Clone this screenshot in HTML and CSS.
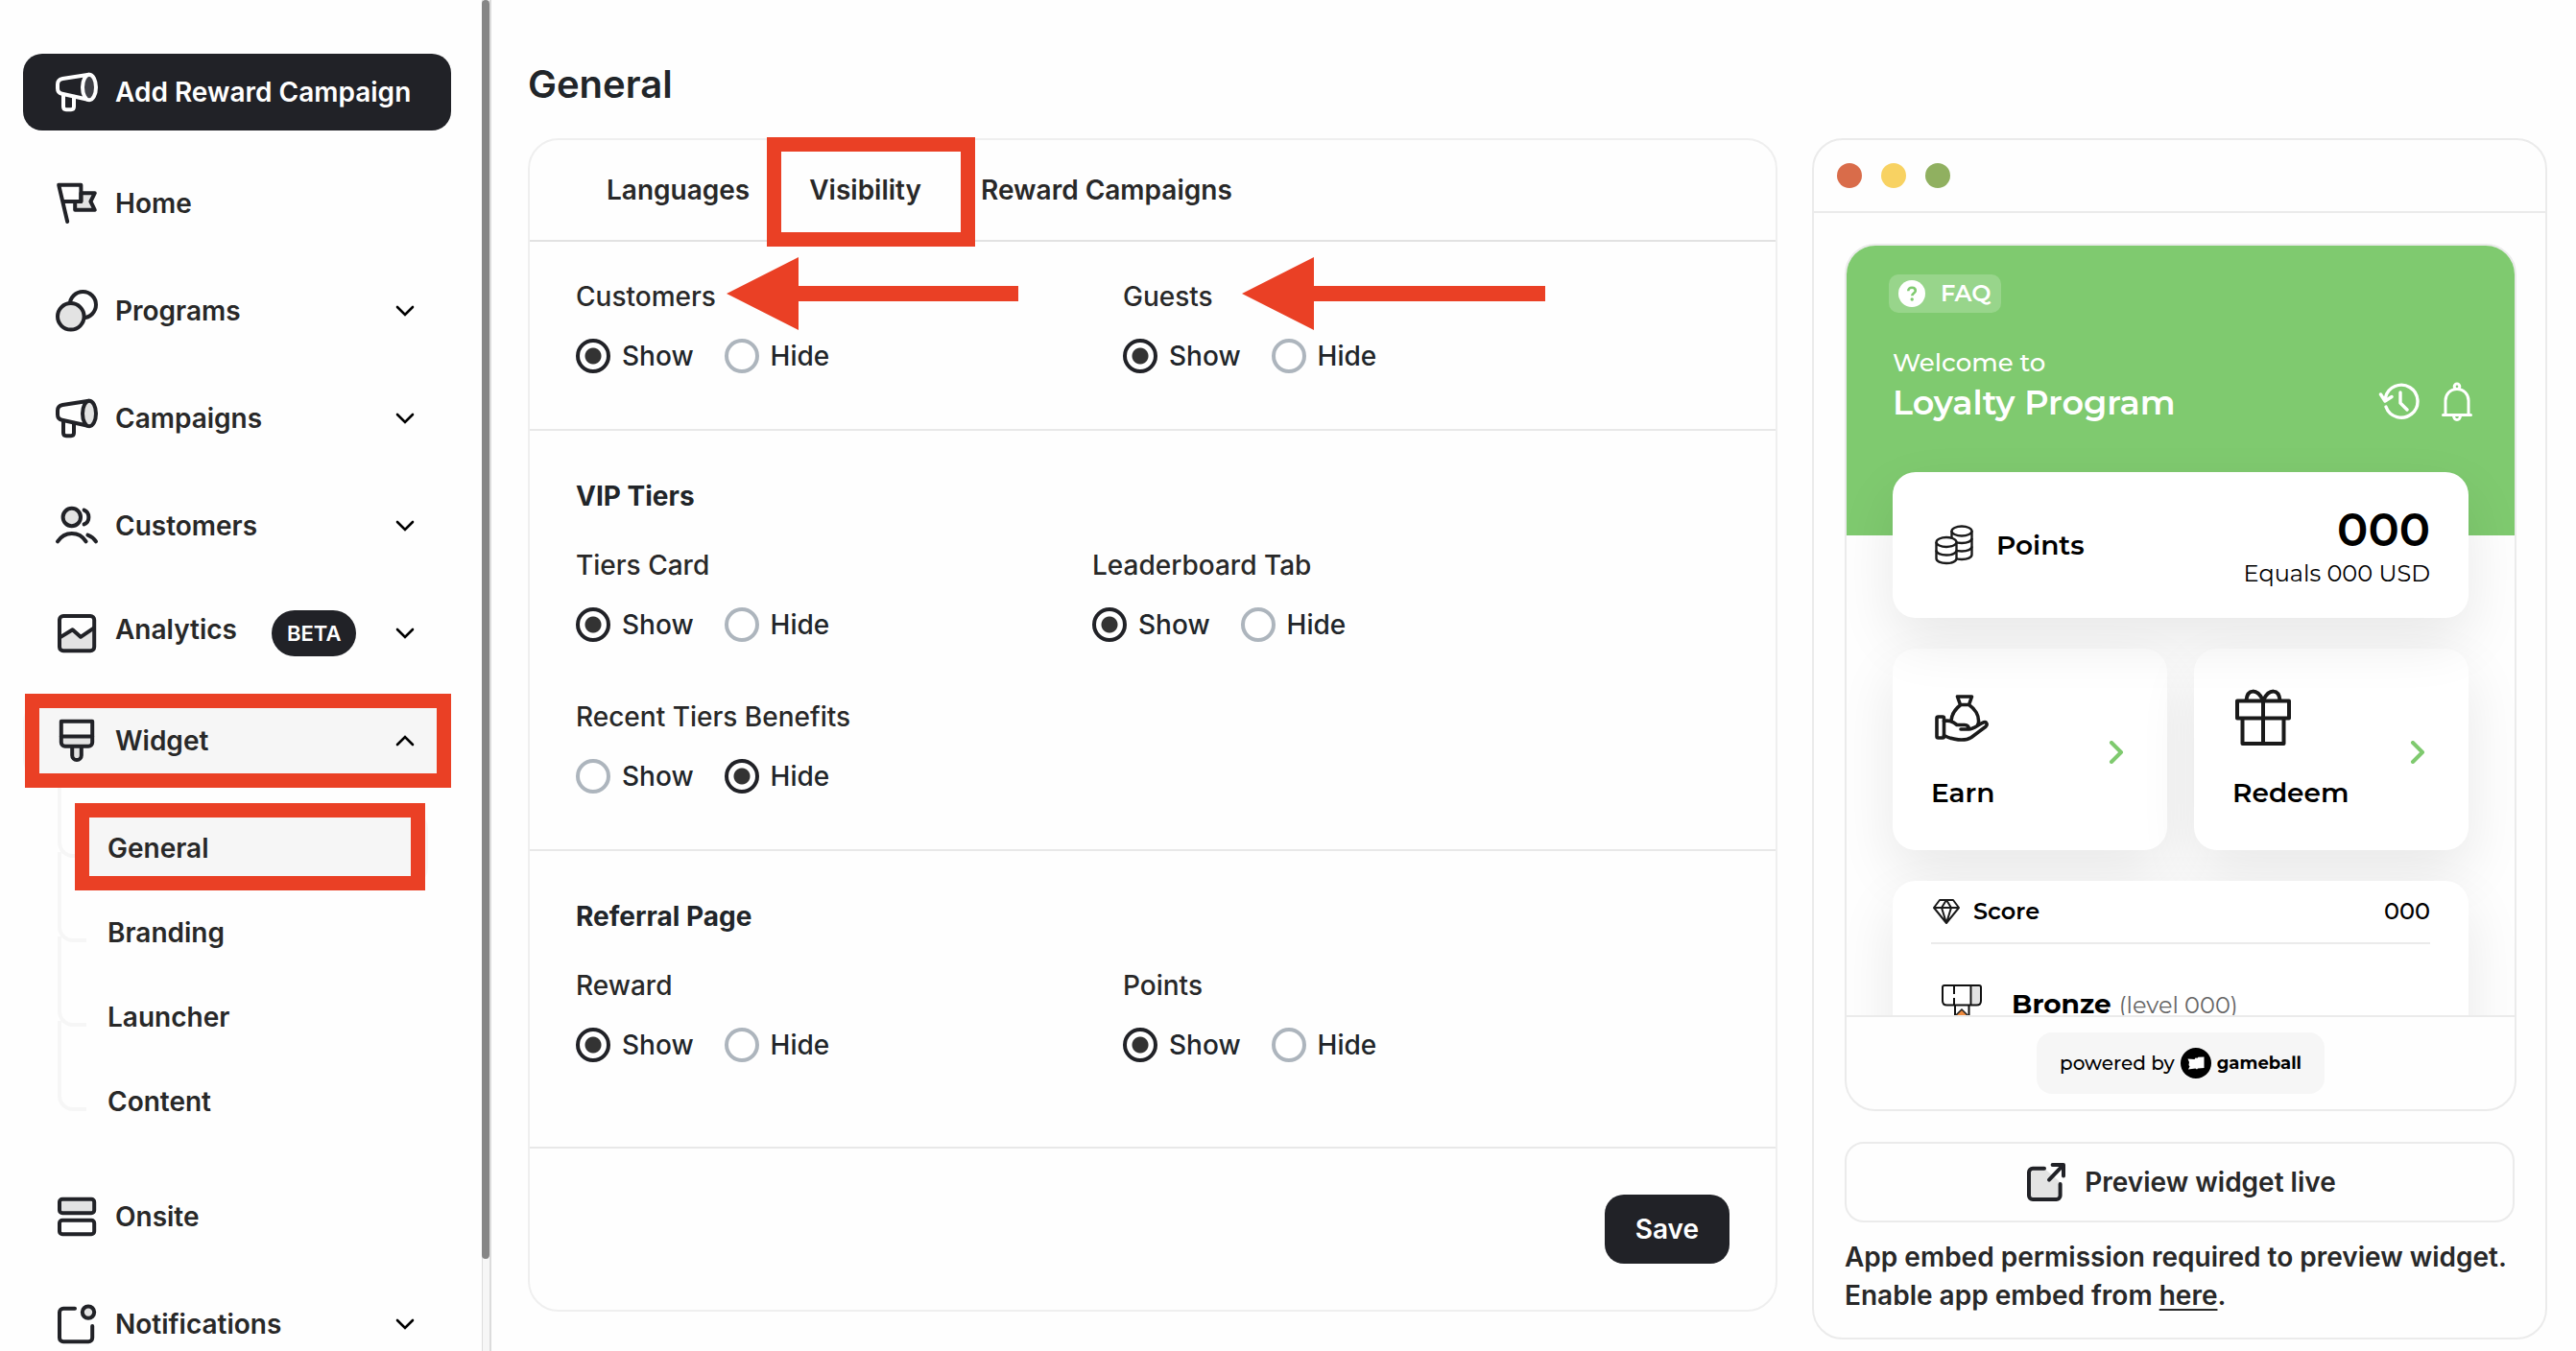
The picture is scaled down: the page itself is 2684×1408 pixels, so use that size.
FILE: index.html
```html
<!DOCTYPE html>
<html lang="en">
<head>
<meta charset="utf-8">
<meta name="viewport" content="width=device-width, initial-scale=1">
<title>General – Widget</title>
<link rel="stylesheet" href="styles.css">
</head>
<body>
<svg class="sprite" aria-hidden="true">
  <symbol id="i-megaphone" viewBox="0 0 24 24">
    <path d="M5 13.200v6.300q0 1.600 1.500 1.600h2.500q1.500 0 1.500-1.600v-5.100" fill="none"/>
    <path d="M18.400 2.900 4.600 5Q2 5.500 2 8v2q0 2.400 2.300 2.900L18.400 16" fill="none"/>
    <ellipse class="tint" cx="18.500" cy="9.500" rx="3.500" ry="6.600"/>
  </symbol>
  <symbol id="i-down" viewBox="0 0 16 16"><path d="m4 6 4 4 4-4" fill="none"/></symbol>
  <symbol id="i-up" viewBox="0 0 16 16"><path d="m4 10 4-4 4 4" fill="none"/></symbol>
  <symbol id="i-next" viewBox="0 0 24 24"><path d="m6 2 10 10L6 22" fill="none"/></symbol>
</svg>

<div class="app">
  <aside class="sidebar">
    <button class="btn add-btn" type="button">
      <svg class="icon"><use href="#i-megaphone"/></svg>
      <span>Add Reward Campaign</span>
    </button>
    <nav class="nav" aria-label="Main">
      <a class="nav-item" href="#home">
        <svg class="icon" viewBox="0 0 24 24"><path class="tint" d="M14.200 6.600h7.200L19.200 11l2.200 4.400H11.100V11h3.100z"/><path d="M7.100 21.500 2.600 2.400h11.600V11H4.700" fill="none"/></svg>
        <span class="nav-label">Home</span>
      </a>
      <a class="nav-item" href="#programs">
        <svg class="icon" viewBox="0 0 24 24"><circle cx="15.200" cy="8.800" r="6.800" fill="none"/><circle class="tint" cx="8.900" cy="14.900" r="6.900"/></svg>
        <span class="nav-label">Programs</span>
        <svg class="chevron"><use href="#i-down"/></svg>
      </a>
      <a class="nav-item" href="#campaigns">
        <svg class="icon"><use href="#i-megaphone"/></svg>
        <span class="nav-label">Campaigns</span>
        <svg class="chevron"><use href="#i-down"/></svg>
      </a>
      <a class="nav-item" href="#customers">
        <svg class="icon" viewBox="0 0 24 24"><circle class="tint" cx="9.400" cy="7.500" r="4.600"/><path d="M15.800 3.800c1.500.6 2.400 2 2.400 3.700s-.9 3.100-2.400 3.700M2 20.200c1.800-2.700 4.400-4.200 7.400-4.200s5.700 1.500 7.400 4.200M17.700 16.800c1.700.6 3.200 1.700 4.300 3.400" fill="none"/></svg>
        <span class="nav-label">Customers</span>
        <svg class="chevron"><use href="#i-down"/></svg>
      </a>
      <a class="nav-item" href="#analytics">
        <svg class="icon" viewBox="0 0 24 24"><path class="tint-fill" d="M3 14.500l7-4 4 3.500 7-4.500V21H3z"/><rect x="3" y="3" width="18.100" height="18.100" rx="2" fill="none"/><path d="m3 14.300 6.800-4.200 4.200 3.800 7-4.700" fill="none"/></svg>
        <span class="nav-label raised">Analytics</span>
        <span class="badge">BETA</span>
        <svg class="chevron"><use href="#i-down"/></svg>
      </a>
      <a class="nav-item active" href="#widget">
        <svg class="icon" viewBox="0 0 24 24"><path class="tint" d="M3.900 9.700h16.200v3.200a2 2 0 0 1-2 2H5.900a2 2 0 0 1-2-2zM9.600 14.900v4.700a2.400 2.400 0 0 0 4.800 0v-4.700z"/><path d="M3.900 9.700V1.900h16.200v7.800" fill="none"/></svg>
        <span class="nav-label">Widget</span>
        <svg class="chevron"><use href="#i-up"/></svg>
        <span class="mark mark-widget"></span>
      </a>
      <ul class="subnav">
        <li><a class="sub-item active" href="#general">General<span class="mark mark-general"></span></a></li>
        <li><a class="sub-item" href="#branding">Branding</a></li>
        <li><a class="sub-item" href="#launcher">Launcher</a></li>
        <li><a class="sub-item" href="#content">Content</a></li>
      </ul>
      <a class="nav-item" href="#onsite">
        <svg class="icon" viewBox="0 0 24 24"><rect class="tint" x="3" y="2.900" width="18.100" height="7.200" rx="1.500"/><rect x="3" y="13.900" width="18.100" height="7.200" rx="1.500" fill="none"/></svg>
        <span class="nav-label">Onsite</span>
      </a>
      <a class="nav-item" href="#notifications">
        <svg class="icon" viewBox="0 0 24 24"><path d="M11 3.900H5a2 2 0 0 0-2 2v13.200a2 2 0 0 0 2 2h13.100a2 2 0 0 0 2-2V13" fill="none"/><circle class="tint" cx="18" cy="5.800" r="3.100"/></svg>
        <span class="nav-label">Notifications</span>
        <svg class="chevron"><use href="#i-down"/></svg>
      </a>
    </nav>
    <div class="scroll-track"><div class="scroll-thumb"></div></div>
  </aside>

  <main class="main">
    <h1>General</h1>
    <div class="columns">
      <form class="card settings">
        <nav class="tabs" aria-label="Settings">
          <a href="#languages">Languages</a>
          <a href="#visibility" aria-current="page">Visibility<span class="mark mark-tab"></span></a>
          <a href="#reward-campaigns">Reward Campaigns</a>
        </nav>

        <section class="section">
          <div class="fields wide">
            <fieldset>
              <legend>Customers</legend>
              <div class="radios">
                <label><input type="radio" name="customers" checked>Show</label>
                <label><input type="radio" name="customers">Hide</label>
              </div>
              <svg class="arrow arrow-customers" viewBox="0 0 304 76"><path d="M0 38 75 0v30h229v16H75v30z"/></svg>
            </fieldset>
            <fieldset>
              <legend>Guests</legend>
              <div class="radios">
                <label><input type="radio" name="guests" checked>Show</label>
                <label><input type="radio" name="guests">Hide</label>
              </div>
              <svg class="arrow arrow-guests" viewBox="0 0 316 76"><path d="M0 38 75 0v30h241v16H75v30z"/></svg>
            </fieldset>
          </div>
        </section>

        <section class="section titled">
          <h2>VIP Tiers</h2>
          <div class="fields">
            <fieldset>
              <legend>Tiers Card</legend>
              <div class="radios">
                <label><input type="radio" name="tiers" checked>Show</label>
                <label><input type="radio" name="tiers">Hide</label>
              </div>
            </fieldset>
            <fieldset>
              <legend>Leaderboard Tab</legend>
              <div class="radios">
                <label><input type="radio" name="leaderboard" checked>Show</label>
                <label><input type="radio" name="leaderboard">Hide</label>
              </div>
            </fieldset>
            <fieldset>
              <legend>Recent Tiers Benefits</legend>
              <div class="radios">
                <label><input type="radio" name="benefits">Show</label>
                <label><input type="radio" name="benefits" checked>Hide</label>
              </div>
            </fieldset>
          </div>
        </section>

        <section class="section titled last">
          <h2>Referral Page</h2>
          <div class="fields wide">
            <fieldset>
              <legend>Reward</legend>
              <div class="radios">
                <label><input type="radio" name="reward" checked>Show</label>
                <label><input type="radio" name="reward">Hide</label>
              </div>
            </fieldset>
            <fieldset>
              <legend>Points</legend>
              <div class="radios">
                <label><input type="radio" name="points" checked>Show</label>
                <label><input type="radio" name="points">Hide</label>
              </div>
            </fieldset>
          </div>
        </section>

        <div class="actions"><button class="btn save-btn" type="button">Save</button></div>
      </form>

      <section class="card preview" aria-label="Widget preview">
        <div class="window-bar"><i class="dot red"></i><i class="dot yellow"></i><i class="dot green"></i></div>
        <div class="preview-inner">
          <div class="phone">
            <div class="phone-body">
              <header class="hero">
                <button class="faq" type="button">
                  <svg viewBox="0 0 28 28"><circle cx="14" cy="14" r="14" fill="#fff"/><path d="M10.300 11.300c0-2.200 1.500-3.600 3.800-3.600s3.700 1.300 3.700 3.200c0 2.500-3.500 2.700-3.500 5.300" fill="none" stroke="#7fca6f" stroke-width="2.600"/><circle cx="14.200" cy="20" r="1.700" fill="#7fca6f"/></svg>
                  FAQ
                </button>
                <div class="hero-row">
                  <div><p class="welcome">Welcome to</p><p class="program">Loyalty Program</p></div>
                  <div class="hero-icons">
                    <svg width="44" height="44" viewBox="0 0 44 44"><path d="M8 26a17 17 0 1 0-.6-9.500M2.500 13l4.500 7 7-4.500M23 11v11l7 7" fill="none" stroke="#fff" stroke-width="3.400" stroke-linecap="round" stroke-linejoin="round"/></svg>
                    <svg width="36" height="44" viewBox="0 0 36 44"><g fill="none" stroke="#fff" stroke-width="3" stroke-linejoin="round" stroke-linecap="round"><path d="M3.500 34.500h29M6 34V19.500C6 13 11 7.500 18 7.500S30 13 30 19.500V34"/><circle cx="18" cy="4.800" r="2.800"/><path d="M14.500 35c0 2.800 1.500 4.600 3.500 4.600s3.500-1.800 3.500-4.600"/></g></svg>
                  </div>
                </div>
              </header>
              <div class="stack">
                <div class="tile points">
                  <svg width="48" height="48" viewBox="0 0 48 48"><g fill="#fff" stroke="#1a1a1a" stroke-width="2.400">
                    <path d="M21.500 9v25c0 3 4.500 5 10.500 5S42.500 37 42.500 34V9"/><path d="M21.500 17c0 3 4.500 5 10.500 5s10.500-2 10.500-5M21.500 25.500c0 3 4.500 5 10.500 5s10.500-2 10.500-5" fill="none"/><ellipse cx="32" cy="9.500" rx="10.500" ry="5"/>
                    <path d="M5.500 21v17c0 3 4.500 5 10.500 5s10.500-2 10.500-5V21"/><path d="M5.500 29.500c0 3 4.500 5 10.500 5s10.500-2 10.500-5" fill="none"/><ellipse cx="16" cy="21" rx="10.500" ry="5"/></g></svg>
                  <span class="tile-name">Points</span>
                  <div class="amount"><strong>000</strong><span>Equals 000 USD</span></div>
                </div>
                <div class="tile-pair">
                  <a class="tile action" href="#earn">
                    <span class="action-main">
                      <svg width="64" height="64" viewBox="0 0 64 64"><g fill="none" stroke="#1a1a1a" stroke-width="3.600" stroke-linejoin="round" stroke-linecap="round">
                      <path d="M27.500 10h15l-3 8.500h-9zM31 18.500C25 23 21.500 29 21 35M39.500 18.500C46 23 50 30 49.500 36.500q0 1.500-.7 2.500"/>
                      <rect x="6" y="31" width="7.500" height="22" rx="1.500"/>
                      <path d="M13.500 35.500C20 34 24 37 27 39.500h8c3 0 4.500 2 4.500 4.500H31M39.500 44c5 0 11-6 15.500-7.300 2.800-.8 4.200 2.500 2 4.500L42 52.500c-7 4.500-20 2.500-28.500-2"/></g></svg>
                      <span class="tile-name">Earn</span>
                    </span>
                    <svg class="next"><use href="#i-next"/></svg>
                  </a>
                  <a class="tile action" href="#redeem">
                    <span class="action-main">
                      <svg width="64" height="64" viewBox="0 0 64 64"><g fill="none" stroke="#1a1a1a" stroke-width="4" stroke-linejoin="round"><path d="M5 14.500h54v18H5zM10.500 32.500h43v26.500h-43zM32 14.500v44.500"/><path d="M14.500 14c1-12 11-13 17.500 0 6.500-13 16.500-12 17.500 0"/></g></svg>
                      <span class="tile-name">Redeem</span>
                    </span>
                    <svg class="next"><use href="#i-next"/></svg>
                  </a>
                </div>
                <div class="tile score">
                  <div class="score-row">
                    <svg width="32" height="32" viewBox="0 0 32 32"><path d="M9 4h14l6 8-13 16L3 12zM3 12h26M11 12l5-8 5 8-5 16z" fill="none" stroke="#1a1a1a" stroke-width="2" stroke-linejoin="round"/></svg>
                    <b>Score</b><span class="score-value">000</span>
                  </div>
                  <div class="tier-row">
                    <svg width="60" height="60" viewBox="0 0 60 60"><path d="M43 1h8v16q0 4-4 4h-4z" fill="#e3e3e3"/><path d="M14 1h36q2 0 2 2v14q0 4.500-4.500 4.500h-31Q12 21.500 12 17V3q0-2 2-2zM24 1v9M24 14v7M41.500 1v20.500M25 22v12M39.500 22v12" fill="none" stroke="#111" stroke-width="2"/><path d="M32 26 20 38h24z" fill="#ee8a3d" stroke="#222" stroke-width="1.500"/></svg>
                    <b>Bronze</b><span class="level">(level 000)</span>
                  </div>
                </div>
              </div>
            </div>
            <footer class="phone-footer">
              <div class="powered">powered by
                <svg width="32" height="32" viewBox="0 0 32 32"><circle cx="16" cy="16" r="16"/><path d="M7.500 11.500l7 .5 1-1.500 2 .3.800-1 6.200-.3v11.500l-6.500.5-1 1-1.500-1-7.500 1 1.500-3-1-1.500.5-3z" fill="#fff"/></svg>
                <b>gameball</b>
              </div>
            </footer>
          </div>
          <button class="btn live-btn" type="button">
            <svg class="icon" viewBox="0 0 24 24"><path class="tint-fill" d="M11 4.900H5a2 2 0 0 0-2 2V19a2 2 0 0 0 2 2h12.300a2 2 0 0 0 2-2V12z"/><path d="M11 4.900H5a2 2 0 0 0-2 2V19a2 2 0 0 0 2 2h12.300a2 2 0 0 0 2-2v-6M15.300 3H21v5.700M20.800 3.200l-7.300 7.600" fill="none"/></svg>
            <span>Preview widget live</span>
          </button>
          <p class="note">App embed permission required to preview widget. Enable app embed from <a href="#embed">here</a>.</p>
        </div>
      </section>
    </div>
  </main>
</div>
</body>
</html>
```
FILE: styles.css
```css
:root {
  --ink: #212227;
  --text: #282828;
  --line: #ebebeb;
  --soft: #f6f6f6;
  --green: #7fca6f;
  --mark: #ea4025;
}

* { box-sizing: border-box; }

body {
  margin: 0;
  background: #fefefe;
  color: var(--text);
  font: 500 28px/40px Inter, "Liberation Sans", sans-serif;
}

h1, h2, p, ul, fieldset { margin: 0; padding: 0; }
ul { list-style: none; }
a { color: inherit; text-decoration: none; }
svg { flex: none; display: block; }
button { font: inherit; color: inherit; cursor: pointer; }

.sprite { position: absolute; width: 0; height: 0; }

.icon {
  width: 48px;
  height: 48px;
  stroke: currentColor;
  stroke-width: 2;
  stroke-linejoin: round;
  stroke-linecap: round;
  color: var(--ink);
}
.tint { fill: var(--tint, #e3e3e3); }
.tint-fill { fill: #e3e3e3; stroke: none; }

.btn {
  display: flex;
  align-items: center;
  border: 0;
  border-radius: 20px;
  font-weight: 600;
}

/* Shell */
.app { display: flex; }

.sidebar {
  position: sticky;
  top: 0;
  flex: none;
  width: 512px;
  height: 100vh;
  overflow: hidden;
  padding: 56px 42px 0 24px;
}

.scroll-track {
  position: absolute;
  top: 0;
  right: 0;
  bottom: 0;
  width: 10px;
  background: #f6f6f6;
  border: solid #dcdcdc;
  border-width: 0 2px 0 1px;
}
.scroll-thumb {
  width: 8px;
  height: calc(100% - 96px);
  margin-left: -1px;
  border-radius: 4px;
  background: #868686;
}

.add-btn {
  width: 100%;
  height: 80px;
  gap: 16px;
  padding: 0 32px;
  background: var(--ink);
  color: #fff;
  white-space: nowrap;
}
.add-btn .icon {
  --tint: #404147;
  color: #fff;
}

.nav {
  display: flex;
  flex-direction: column;
  gap: 32px;
  margin-top: 36px;
}

.nav-item {
  position: relative;
  display: flex;
  align-items: center;
  gap: 16px;
  min-height: 80px;
  padding: 0 32px;
  border-radius: 20px;
  font-weight: 600;
}
.nav-item .chevron { margin-left: auto; }
.nav-item.active, .sub-item.active { background: var(--soft); }
.raised { padding-bottom: 8px; }

.chevron {
  width: 32px;
  height: 32px;
  stroke: #000;
  stroke-width: 1.3;
  stroke-linecap: round;
}

.badge {
  margin-left: 20px;
  padding: 4px 16px;
  border-radius: 24px;
  background: var(--ink);
  color: #fff;
  font-size: 22px;
}

.subnav {
  display: flex;
  flex-direction: column;
  gap: 8px;
  margin: 0 24px 8px 56px;
}
.sub-item {
  position: relative;
  display: block;
  padding: 20px 32px;
  border-radius: 20px;
  font-weight: 600;
}
.sub-item::before {
  content: "";
  position: absolute;
  top: -44px;
  left: -20px;
  width: 26px;
  height: 90px;
  border: solid var(--soft);
  border-width: 0 0 4px 4px;
  border-bottom-left-radius: 16px;
}

/* Highlight frames and arrows */
.mark {
  position: absolute;
  z-index: 1;
  border: 15px solid var(--mark);
  pointer-events: none;
}
.mark-widget { inset: -9px 0 -9px 2px; }
.mark-general { inset: -7px 3px -4px -2px; }
.mark-tab { inset: -35px -56px -39px -44px; }

.arrow {
  position: absolute;
  top: -61px;
  height: 76px;
  fill: var(--mark);
}
.arrow-customers { left: 157px; width: 304px; }
.arrow-guests { left: 124px; width: 316px; }

/* Main */
.main {
  flex: 1;
  min-width: 0;
  padding: 60px 30px 12px 38px;
}
h1 {
  color: #212529;
  font-size: 40px;
  line-height: 56px;
  font-weight: 600;
}
.columns {
  display: grid;
  grid-template-columns: minmax(0, 1fr) 766px;
  gap: 36px;
  align-items: start;
  margin-top: 28px;
}
.card {
  border: 2px solid #efefef;
  border-radius: 32px;
}

.tabs {
  display: flex;
  gap: 62px;
  padding: 32px 80px;
  border-bottom: 2px solid #e2e2e2;
  font-weight: 600;
}
.tabs a { position: relative; }

.section {
  padding: 37px 48px 56px;
  border-bottom: 2px solid #e8e8e8;
}
.section.titled { padding-top: 48px; }
.section.last { padding-bottom: 86px; }

h2 {
  margin-bottom: 32px;
  color: #212529;
  font-size: 28px;
  line-height: 40px;
  font-weight: 700;
}

.fields {
  display: grid;
  grid-template-columns: 538px 1fr;
  row-gap: 56px;
}
.fields.wide { grid-template-columns: 570px 1fr; }

fieldset {
  position: relative;
  min-width: 0;
  border: 0;
}
legend { padding: 0; font-weight: 500; }

.radios {
  display: flex;
  gap: 32px;
  margin-top: 22px;
  color: #212529;
}
.radios label {
  display: flex;
  align-items: center;
  gap: 12px;
}
input[type="radio"] {
  appearance: none;
  width: 36px;
  height: 36px;
  margin: 0;
  border: 4px solid #adb5bd;
  border-radius: 50%;
  background: #fff;
}
input[type="radio"]:checked {
  border-color: var(--ink);
  background: radial-gradient(circle, #333 8px, #fff 9px);
}

.actions {
  display: flex;
  justify-content: flex-end;
  padding: 48px;
}
.save-btn {
  height: 72px;
  padding: 0 32px;
  background: var(--ink);
  color: #fff;
}

/* Preview */
.preview { border-color: var(--line); }
.window-bar {
  display: flex;
  gap: 20px;
  padding: 24px;
  border-bottom: 2px solid var(--line);
}
.dot {
  width: 26px;
  height: 26px;
  border-radius: 50%;
}
.red { background: #d96c4a; }
.yellow { background: #f8d262; }
.green { background: #90b060; }

.preview-inner { padding: 32px 32px 24px; }

.phone {
  overflow: hidden;
  margin-right: -2px;
  border: 2px solid var(--line);
  border-radius: 32px;
  color: #000;
  font-family: Montserrat, Inter, "Liberation Sans", sans-serif;
}
.phone-body { height: 802px; overflow: hidden; }

.hero {
  padding: 30px 48px 116px;
  background: var(--green);
  color: #fff;
}
.faq {
  display: flex;
  align-items: center;
  gap: 16px;
  height: 40px;
  margin-left: -4px;
  padding: 0 10px;
  border: 0;
  border-radius: 10px;
  background: #98d58b;
  font-size: 24px;
  font-weight: 600;
}
.faq svg { width: 28px; height: 28px; }
.hero-row {
  display: flex;
  justify-content: space-between;
  align-items: flex-end;
  margin-top: 32px;
}
.welcome { font-size: 26px; font-weight: 500; }
.program { font-size: 35px; line-height: 44px; font-weight: 600; }
.hero-icons { display: flex; gap: 20px; margin-right: -6px; }

.stack {
  display: flex;
  flex-direction: column;
  gap: 32px;
  margin-top: -66px;
  padding: 0 48px;
}
.tile {
  position: relative;
  border-radius: 24px;
  background: #fff;
  box-shadow: 0 24px 60px rgba(0, 0, 0, .09);
}
.tile-name { font-weight: 600; }

.points {
  display: flex;
  align-items: center;
  gap: 20px;
  padding: 28px 40px;
  z-index: 1;
}
.amount {
  display: flex;
  flex-direction: column;
  margin-left: auto;
  padding-top: 4px;
  text-align: right;
  font-size: 24px;
  line-height: 36px;
  font-weight: 400;
}
.amount strong { font-size: 48px; line-height: 56px; font-weight: 600; }

.tile-pair {
  display: grid;
  grid-template-columns: 1fr 1fr;
  gap: 28px;
}
.action {
  display: flex;
  align-items: center;
  justify-content: space-between;
  padding: 40px;
}
.action-main { display: flex; flex-direction: column; gap: 26px; }
.next {
  width: 24px;
  height: 24px;
  margin-top: 6px;
  stroke: var(--green);
  stroke-width: 4;
  stroke-linecap: round;
  stroke-linejoin: round;
}

.score { padding: 14px 40px 40px; }
.score b { font-weight: 600; }
.score-row {
  display: flex;
  align-items: center;
  gap: 12px;
  padding-bottom: 14px;
  border-bottom: 2px solid var(--line);
  font-size: 24px;
  line-height: 36px;
}
.score-value { margin-left: auto; }
.tier-row {
  display: flex;
  align-items: baseline;
  gap: 8px;
  margin-top: 42px;
}
.tier-row svg { align-self: flex-start; margin-right: 16px; }
.tier-row b { font-weight: 700; }
.level { color: #666; font-size: 24px; font-weight: 400; }

.phone-footer {
  display: flex;
  justify-content: center;
  padding: 16px;
  border-top: 2px solid var(--line);
}
.powered {
  display: flex;
  align-items: center;
  gap: 6px;
  height: 64px;
  padding: 0 24px;
  border-radius: 16px;
  background: var(--soft);
  font-size: 20px;
}
.powered b { font-size: 18px; }

.live-btn {
  width: 100%;
  height: 84px;
  justify-content: center;
  gap: 16px;
  margin-top: 32px;
  border: 2px solid var(--line);
  background: transparent;
}
.note { margin-top: 16px; font-weight: 600; }
.note a { text-decoration: underline; text-underline-offset: 4px; text-decoration-thickness: 2px; }
```
